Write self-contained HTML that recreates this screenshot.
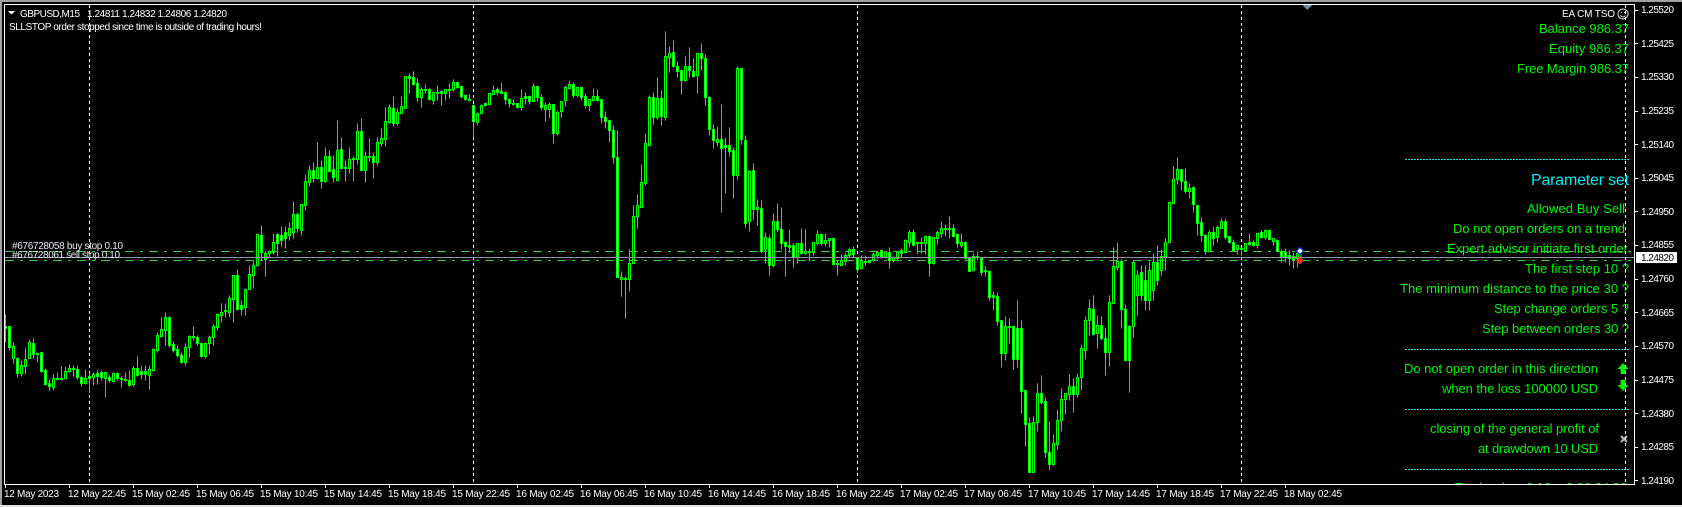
<!DOCTYPE html>
<html><head><meta charset="utf-8"><style>
html,body{margin:0;padding:0;background:#000;width:1682px;height:507px;overflow:hidden}
svg{display:block}
text{font-family:"Liberation Sans",sans-serif}
.p{font-size:10px;fill:#fff}
.g{font-size:13px;fill:#00f400;text-anchor:end}
</style></head><body>
<svg width="1682" height="507" viewBox="0 0 1682 507" xmlns="http://www.w3.org/2000/svg">
<rect width="1682" height="507" fill="#000"/>
<g shape-rendering="crispEdges">
<path d="M89.5 5V484M473.5 5V484M857.5 5V484M1241.5 5V484M1625.5 5V484" stroke="#fff" stroke-dasharray="3 3" fill="none"/>
<g transform="translate(.5 .5)" stroke="#00ff00" fill="none">
<path d="M5 314V342M9 326V350M13 342V363M17 357V377M21 360V376M25 347V374M29 339V358M33 338V358M37 352V362M41 352V372M45 368V385M49 379V390M53 374V390M57 372V380M61 366V380M65 366V379M69 364V372M73 365V376M77 365V379M81 375V386M85 369V384M89 372V392M93 372V385M97 370V384M101 370V380M105 372V397M109 375V382M113 372V382M117 372V380M121 376V387M125 372V381M129 370V386M133 366V386M137 356V376M141 365V379M145 365V380M149 365V389M153 348V371M157 332V352M161 317V337M165 312V345M169 316V347M173 341V352M177 345V357M181 352V363M185 343V365M189 335V357M193 326V340M197 335V345M201 342V357M205 342V358M209 335V354M213 324V345M217 313V330M221 303V322M225 303V317M229 295V317M233 275V322M237 269V310M241 300V315M245 288V315M249 265V289M253 260V288M257 233V266M261 225V260M265 250V276M269 250V257M273 233V254M277 233V256M281 226V246M285 226V248M289 222V240M293 201V238M297 212V232M301 204V235M305 174V210M309 165V186M313 162V182M317 142V179M321 160V188M325 147V182M329 150V171M333 155V182M337 120V180M341 137V169M345 160V181M349 147V173M353 156V181M357 123V164M361 118V170M365 151V182M369 138V161M373 152V178M377 137V165M381 128V146M385 107V146M389 104V123M393 96V126M397 108V125M401 96V113M405 76V108M409 73V93M413 71V85M417 78V101M421 87V107M425 84V93M429 88V100M433 91V104M437 85V100M441 90V105M445 89V100M449 83V98M453 79V91M457 82V88M461 85V98M465 94V100M469 94V101M473 105V138M477 112V125M481 104V113M485 103V106M489 92V105M493 85V94M497 87V95M501 82V93M505 91V104M509 98V107M513 99V105M517 103V108M521 89V110M525 92V104M529 95V104M533 83V101M537 86V101M541 94V110M545 102V121M549 102V118M553 104V143M557 110V135M561 101V117M565 85V106M569 80V88M573 82V97M577 87V97M581 86V100M585 93V108M589 99V111M593 88V101M597 89V101M601 99V123M605 111V128M609 120V142M613 125V163M617 130V277M621 271V296M625 276V318M629 249V291M633 205V263M637 194V228M641 164V207M645 133V185M649 95V145M653 92V124M657 77V119M661 90V125M665 31V120M669 46V72M673 40V67M677 61V77M681 69V94M685 56V81M689 47V77M693 58V77M697 52V93M701 43V70M705 54V105M709 96V135M713 124V148M717 126V146M721 104V212M725 137V193M729 127V156M733 147V198M737 66V179M741 68V144M745 135V227M749 170V231M753 163V219M757 199V225M761 200V253M765 232V263M769 235V275M773 213V267M777 203V232M781 207V249M785 241V276M789 229V252M793 243V267M797 243V263M801 228V254M805 229V254M809 248V261M813 242V255M817 230V245M821 233V245M825 233V246M829 238V247M833 237V265M837 260V275M841 254V266M845 253V265M849 247V257M853 246V257M857 257V272M861 255V269M865 255V265M869 260V263M873 252V261M877 250V258M881 249V258M885 251V258M889 247V268M893 256V262M897 251V260M901 248V257M905 239V253M909 230V247M913 229V245M917 241V254M921 237V253M925 235V254M929 235V276M933 236V264M937 230V244M941 221V237M945 224V236M949 216V238M953 224V237M957 233V247M961 233V247M965 241V259M969 257V271M973 253V271M977 251V260M981 257V275M985 266V276M989 271V300M993 291V310M997 292V325M1001 320V367M1005 316V360M1009 318V343M1013 326V369M1017 300V367M1021 320V413M1025 390V446M1029 417V472M1033 416V472M1037 383V431M1041 375V404M1045 397V457M1049 421V470M1053 434V465M1057 409V449M1061 388V431M1065 393V414M1069 374V400M1073 378V412M1077 373V397M1081 344V390M1085 316V359M1089 299V335M1093 295V335M1097 315V348M1101 316V340M1105 327V375M1109 295V366M1113 247V303M1117 242V270M1121 259V328M1125 304V361M1129 325V392M1133 260V337M1137 270V315M1141 265V300M1145 265V310M1149 261V310M1153 253V300M1157 245V285M1161 249V275M1165 238V270M1169 202V243M1173 166V203M1177 157V184M1181 169V190M1185 168V193M1189 183V198M1193 186V212M1197 205V235M1201 217V241M1205 234V254M1209 230V252M1213 226V245M1217 225V242M1221 218V228M1225 218V239M1229 236V243M1233 239V250M1237 245V254M1241 248V255M1245 243V251M1249 233V245M1253 240V246M1257 233V248M1261 230V238M1265 229V239M1269 229V239M1273 238V245M1277 239V251M1281 249V262M1285 248V262M1289 250V265M1293 252V268M1297 252V267"/>
<path fill="#000" d="M12 346h2V358h-2zM20 365h2V373h-2zM24 359h2V366h-2zM28 342h2V358h-2zM52 378h2V387h-2zM56 378h2V379h-2zM60 378h2V379h-2zM64 371h2V378h-2zM68 368h2V371h-2zM72 368h2V369h-2zM84 378h2V383h-2zM92 374h2V377h-2zM104 372h2V378h-2zM112 373h2V381h-2zM132 368h2V384h-2zM148 369h2V375h-2zM152 349h2V370h-2zM156 335h2V350h-2zM160 329h2V336h-2zM164 317h2V330h-2zM184 347h2V362h-2zM188 336h2V347h-2zM204 343h2V356h-2zM208 337h2V343h-2zM212 326h2V337h-2zM216 314h2V327h-2zM220 312h2V315h-2zM228 298h2V312h-2zM232 275h2V299h-2zM244 289h2V307h-2zM248 274h2V289h-2zM252 265h2V275h-2zM256 234h2V265h-2zM264 253h2V259h-2zM268 251h2V253h-2zM272 242h2V252h-2zM288 228h2V235h-2zM292 214h2V232h-2zM300 204h2V230h-2zM304 181h2V205h-2zM308 170h2V182h-2zM316 167h2V178h-2zM324 156h2V181h-2zM336 150h2V180h-2zM348 159h2V168h-2zM356 131h2V159h-2zM364 156h2V170h-2zM376 142h2V162h-2zM380 138h2V143h-2zM384 121h2V139h-2zM388 107h2V122h-2zM396 112h2V123h-2zM400 106h2V113h-2zM404 76h2V108h-2zM420 89h2V97h-2zM432 92h2V100h-2zM444 89h2V93h-2zM452 82h2V89h-2zM476 113h2V122h-2zM480 105h2V113h-2zM488 93h2V104h-2zM492 90h2V94h-2zM520 98h2V107h-2zM532 86h2V101h-2zM544 105h2V109h-2zM548 104h2V109h-2zM556 112h2V133h-2zM560 101h2V111h-2zM564 87h2V100h-2zM568 84h2V88h-2zM576 87h2V95h-2zM588 99h2V105h-2zM592 96h2V100h-2zM620 277h2V279h-2zM628 263h2V279h-2zM632 216h2V263h-2zM636 205h2V216h-2zM640 182h2V207h-2zM644 143h2V183h-2zM648 97h2V145h-2zM656 98h2V117h-2zM664 56h2V117h-2zM668 53h2V57h-2zM684 66h2V80h-2zM696 53h2V75h-2zM716 139h2V142h-2zM736 68h2V175h-2zM748 171h2V221h-2zM756 207h2V209h-2zM764 237h2V249h-2zM772 221h2V265h-2zM796 243h2V257h-2zM804 251h2V253h-2zM812 242h2V252h-2zM816 234h2V243h-2zM824 240h2V243h-2zM828 238h2V240h-2zM840 260h2V265h-2zM844 255h2V261h-2zM848 249h2V255h-2zM860 260h2V268h-2zM872 254h2V260h-2zM876 252h2V255h-2zM884 251h2V257h-2zM892 257h2V260h-2zM896 252h2V258h-2zM904 240h2V252h-2zM908 232h2V242h-2zM924 236h2V243h-2zM932 237h2V263h-2zM936 232h2V238h-2zM940 228h2V233h-2zM960 242h2V245h-2zM972 256h2V270h-2zM1004 326h2V353h-2zM1032 422h2V472h-2zM1036 393h2V422h-2zM1052 443h2V464h-2zM1056 420h2V444h-2zM1060 399h2V420h-2zM1064 393h2V399h-2zM1068 386h2V394h-2zM1076 377h2V394h-2zM1080 348h2V377h-2zM1084 320h2V350h-2zM1088 308h2V320h-2zM1096 325h2V333h-2zM1108 302h2V352h-2zM1112 266h2V303h-2zM1116 261h2V267h-2zM1132 262h2V326h-2zM1136 275h2V295h-2zM1148 270h2V300h-2zM1152 262h2V290h-2zM1160 256h2V270h-2zM1164 242h2V256h-2zM1168 202h2V242h-2zM1172 179h2V203h-2zM1176 169h2V179h-2zM1188 188h2V191h-2zM1208 232h2V251h-2zM1216 227h2V237h-2zM1220 221h2V228h-2zM1236 245h2V249h-2zM1244 243h2V250h-2zM1256 233h2V245h-2zM1264 230h2V237h-2zM1272 238h2V241h-2zM1296 253h2V258h-2z"/>
<path fill="#fff" d="M4 326h2V328h-2zM8 326h2V347h-2zM16 358h2V373h-2zM32 343h2V354h-2zM36 353h2V354h-2zM40 352h2V371h-2zM44 370h2V384h-2zM48 383h2V386h-2zM76 369h2V377h-2zM80 377h2V383h-2zM88 376h2V378h-2zM96 373h2V376h-2zM100 372h2V377h-2zM108 377h2V380h-2zM116 373h2V378h-2zM120 378h2V379h-2zM124 379h2V380h-2zM128 380h2V385h-2zM136 368h2V375h-2zM140 371h2V374h-2zM144 371h2V374h-2zM168 317h2V345h-2zM172 344h2V350h-2zM176 349h2V355h-2zM180 355h2V362h-2zM192 336h2V337h-2zM196 337h2V343h-2zM200 343h2V356h-2zM224 310h2V311h-2zM236 275h2V309h-2zM240 305h2V309h-2zM260 235h2V252h-2zM276 234h2V243h-2zM280 235h2V240h-2zM284 232h2V238h-2zM296 214h2V228h-2zM312 170h2V178h-2zM320 167h2V181h-2zM328 156h2V171h-2zM332 169h2V177h-2zM340 149h2V168h-2zM344 167h2V168h-2zM352 158h2V159h-2zM360 131h2V170h-2zM368 156h2V157h-2zM372 156h2V162h-2zM392 108h2V123h-2zM408 76h2V78h-2zM412 77h2V84h-2zM416 83h2V97h-2zM424 89h2V90h-2zM428 89h2V99h-2zM436 92h2V93h-2zM440 91h2V93h-2zM448 89h2V90h-2zM456 82h2V87h-2zM460 86h2V96h-2zM464 95h2V99h-2zM468 99h2V100h-2zM472 105h2V121h-2zM484 103h2V105h-2zM496 89h2V92h-2zM500 91h2V93h-2zM504 92h2V99h-2zM508 99h2V103h-2zM512 103h2V104h-2zM516 103h2V107h-2zM524 96h2V98h-2zM528 96h2V101h-2zM536 86h2V97h-2zM540 97h2V107h-2zM552 104h2V133h-2zM572 84h2V95h-2zM580 87h2V97h-2zM584 96h2V105h-2zM596 96h2V100h-2zM600 99h2V117h-2zM604 117h2V121h-2zM608 120h2V130h-2zM612 130h2V157h-2zM616 157h2V277h-2zM624 278h2V279h-2zM652 97h2V117h-2zM660 98h2V116h-2zM672 52h2V66h-2zM676 66h2V71h-2zM680 70h2V80h-2zM688 66h2V70h-2zM692 71h2V76h-2zM700 53h2V58h-2zM704 58h2V97h-2zM708 97h2V129h-2zM712 129h2V140h-2zM720 139h2V148h-2zM724 145h2V147h-2zM728 145h2V151h-2zM732 150h2V175h-2zM740 68h2V139h-2zM744 140h2V223h-2zM752 170h2V209h-2zM760 208h2V251h-2zM768 238h2V265h-2zM776 221h2V229h-2zM780 229h2V243h-2zM784 242h2V246h-2zM788 245h2V247h-2zM792 245h2V257h-2zM800 243h2V253h-2zM808 251h2V252h-2zM820 234h2V243h-2zM832 238h2V264h-2zM836 263h2V264h-2zM852 249h2V254h-2zM856 257h2V269h-2zM864 261h2V262h-2zM868 260h2V262h-2zM880 250h2V257h-2zM888 252h2V260h-2zM900 250h2V253h-2zM912 232h2V245h-2zM916 242h2V243h-2zM920 242h2V243h-2zM928 236h2V263h-2zM944 228h2V229h-2zM948 228h2V229h-2zM952 228h2V236h-2zM956 234h2V243h-2zM964 242h2V258h-2zM968 258h2V271h-2zM976 256h2V257h-2zM980 258h2V272h-2zM984 270h2V271h-2zM988 271h2V297h-2zM992 295h2V297h-2zM996 296h2V321h-2zM1000 320h2V353h-2zM1008 326h2V327h-2zM1012 326h2V359h-2zM1016 328h2V359h-2zM1020 328h2V391h-2zM1024 390h2V424h-2zM1028 423h2V472h-2zM1040 393h2V402h-2zM1044 401h2V452h-2zM1048 452h2V464h-2zM1072 386h2V394h-2zM1092 309h2V334h-2zM1100 325h2V338h-2zM1104 338h2V352h-2zM1120 261h2V309h-2zM1124 309h2V360h-2zM1128 326h2V360h-2zM1140 272h2V295h-2zM1144 280h2V300h-2zM1156 262h2V280h-2zM1180 169h2V181h-2zM1184 181h2V191h-2zM1192 187h2V204h-2zM1196 205h2V223h-2zM1200 222h2V235h-2zM1204 235h2V251h-2zM1212 232h2V238h-2zM1224 221h2V237h-2zM1228 236h2V242h-2zM1232 242h2V250h-2zM1240 248h2V249h-2zM1248 242h2V244h-2zM1252 242h2V245h-2zM1260 232h2V237h-2zM1268 230h2V239h-2zM1276 240h2V251h-2zM1280 251h2V256h-2zM1284 252h2V256h-2zM1288 255h2V258h-2zM1292 256h2V260h-2z"/>
</g>
<path d="M5 251.500H1634M5 260.500H1634" stroke="#32cd32" stroke-dasharray="9 6 3 6" fill="none"/>
<path d="M5 257.500H1634" stroke="#8a92a0" fill="none"/>
<path d="M1302 5h10l-5 5z" fill="#778899"/>
<path d="M1405 159.500H1629M1405 349.500H1629M1405 409.500H1629M1405 469.500H1629" stroke="#10e4ec" stroke-dasharray="2 1" fill="none"/>
</g>
<path d="M1301 253V259" stroke="#00ff00" stroke-width="1"/>
<path d="M1296.500 251l3.500-3.500 3.500 3.500-3.500 3.500z" fill="#fff" stroke="#0030ff" stroke-width="1.200"/>
<path d="M1296.500 260.500l3.500-3.500 3.500 3.500-3.500 3.500z" fill="#ff2010" stroke="#ff4020" stroke-width=".6"/>

<path d="M8 11h7l-3.500 3.500z" fill="#fff"/>
<text x="20" y="17" class="p" textLength="60" lengthAdjust="spacing">GBPUSD,M15</text>
<text x="87" y="17" class="p" textLength="140" lengthAdjust="spacing">1.24811 1.24832 1.24806 1.24820</text>
<text x="9" y="30" class="p" textLength="253" lengthAdjust="spacing">SLLSTOP order stopped since time is outside of trading hours!</text>
<text x="12" y="249" class="p" style="fill:#e4eaf0" textLength="111" lengthAdjust="spacing">#676728058 buy stop 0.10</text>
<text x="12" y="258" class="p" style="fill:#e4eaf0" textLength="108" lengthAdjust="spacing">#676728061 sell stop 0.10</text>

<text x="1562" y="17" class="p" textLength="53" lengthAdjust="spacing">EA CM TSO</text>
<circle cx="1623" cy="14" r="5" fill="none" stroke="#d8d8d8"/>
<path d="M1621 12.500h1M1624 12.500h1M1620.500 15.500q2.500 3 5 0" stroke="#d8d8d8" fill="none"/>

<text x="1629" y="33" class="g" textLength="90" lengthAdjust="spacing">Balance 986.37</text>
<text x="1629" y="53" class="g" textLength="80" lengthAdjust="spacing">Equity 986.37</text>
<text x="1629" y="73" class="g" textLength="112" lengthAdjust="spacing">Free Margin 986.37</text>
<text x="1629" y="185" class="g" style="font-size:16px;fill:#00eaf4" textLength="98" lengthAdjust="spacing">Parameter set</text>
<text x="1625" y="213" class="g" textLength="98" lengthAdjust="spacing">Allowed Buy Sell</text>
<text x="1625" y="233" class="g" textLength="172" lengthAdjust="spacing">Do not open orders on a trend</text>
<text x="1628" y="253" class="g" textLength="181" lengthAdjust="spacing">Expert advisor initiate first order</text>
<text x="1629" y="273" class="g" textLength="104" lengthAdjust="spacing">The first step 10 ?</text>
<text x="1629" y="293" class="g" textLength="229" lengthAdjust="spacing">The minimum distance to the price 30 ?</text>
<text x="1629" y="313" class="g" textLength="135" lengthAdjust="spacing">Step change orders 5 ?</text>
<text x="1629" y="333" class="g" textLength="147" lengthAdjust="spacing">Step between orders 30 ?</text>
<text x="1598" y="373" class="g" textLength="194" lengthAdjust="spacing">Do not open order in this direction</text>
<text x="1598" y="393" class="g" textLength="156" lengthAdjust="spacing">when the loss 100000 USD</text>
<text x="1599" y="433" class="g" textLength="169" lengthAdjust="spacing">closing of the general profit of</text>
<text x="1598" y="453" class="g" textLength="120" lengthAdjust="spacing">at drawdown 10 USD</text>
<text x="1627" y="492" class="g" textLength="172" lengthAdjust="spacing">Total orders 0.10 = 0.00 24.38</text>

<path d="M1623 363l5.500 6h-3v5h-5v-5h-3z" fill="#00f400"/>
<path d="M1623 391l5.500-6h-3v-5h-5v5h-3z" fill="#00f400"/>
<path d="M1621 436l6 6M1627 436l-6 6" stroke="#a8b0b8" stroke-width="2.200"/>

<g shape-rendering="crispEdges">
<path d="M89.500 5V40M1625.500 5V484" stroke="#fff" stroke-dasharray="3 3" fill="none"/>
<rect x="0" y="485" width="1682" height="20" fill="#000"/>
<rect x="0" y="0" width="1682" height="2" fill="#a0a0a0"/>
<rect x="0" y="0" width="2" height="507" fill="#a0a0a0"/>
<rect x="0" y="505" width="1682" height="2" fill="#e4e4e4"/>
<path d="M4 4.500H1634.500V484.500H4.500V4" stroke="#fff" fill="none"/>
<path d="M1635 10.500h3M1635 43.500h3M1635 77.500h3M1635 111.500h3M1635 144.500h3M1635 178.500h3M1635 211.500h3M1635 245.500h3M1635 279.500h3M1635 312.500h3M1635 346.500h3M1635 380.500h3M1635 413.500h3M1635 447.500h3M1635 480.500h3" stroke="#fff"/>
<path d="M5.500 485v3M69.500 485v3M133.500 485v3M197.500 485v3M261.500 485v3M325.500 485v3M389.500 485v3M453.500 485v3M517.500 485v3M581.500 485v3M645.500 485v3M709.500 485v3M773.500 485v3M837.500 485v3M901.500 485v3M965.500 485v3M1029.500 485v3M1093.500 485v3M1157.500 485v3M1221.500 485v3M1285.500 485v3" stroke="#fff"/>
<rect x="1636" y="252" width="41" height="11" fill="#fff"/>
</g>
<g>
<text x="1641" y="13" class="p" textLength="33">1.25520</text>
<text x="1641" y="47" class="p" textLength="33">1.25425</text>
<text x="1641" y="80" class="p" textLength="33">1.25330</text>
<text x="1641" y="114" class="p" textLength="33">1.25235</text>
<text x="1641" y="148" class="p" textLength="33">1.25140</text>
<text x="1641" y="181" class="p" textLength="33">1.25045</text>
<text x="1641" y="215" class="p" textLength="33">1.24950</text>
<text x="1641" y="248" class="p" textLength="33">1.24855</text>
<text x="1641" y="261" class="p" style="fill:#000" textLength="33">1.24820</text>
<text x="1641" y="282" class="p" textLength="33">1.24760</text>
<text x="1641" y="316" class="p" textLength="33">1.24665</text>
<text x="1641" y="349" class="p" textLength="33">1.24570</text>
<text x="1641" y="383" class="p" textLength="33">1.24475</text>
<text x="1641" y="417" class="p" textLength="33">1.24380</text>
<text x="1641" y="450" class="p" textLength="33">1.24285</text>
<text x="1641" y="484" class="p" textLength="33">1.24190</text>
</g>
<text x="4" y="497" class="p" textLength="55">12 May 2023</text>
<text x="68" y="497" class="p" textLength="58">12 May 22:45</text>
<text x="132" y="497" class="p" textLength="58">15 May 02:45</text>
<text x="196" y="497" class="p" textLength="58">15 May 06:45</text>
<text x="260" y="497" class="p" textLength="58">15 May 10:45</text>
<text x="324" y="497" class="p" textLength="58">15 May 14:45</text>
<text x="388" y="497" class="p" textLength="58">15 May 18:45</text>
<text x="452" y="497" class="p" textLength="58">15 May 22:45</text>
<text x="516" y="497" class="p" textLength="58">16 May 02:45</text>
<text x="580" y="497" class="p" textLength="58">16 May 06:45</text>
<text x="644" y="497" class="p" textLength="58">16 May 10:45</text>
<text x="708" y="497" class="p" textLength="58">16 May 14:45</text>
<text x="772" y="497" class="p" textLength="58">16 May 18:45</text>
<text x="836" y="497" class="p" textLength="58">16 May 22:45</text>
<text x="900" y="497" class="p" textLength="58">17 May 02:45</text>
<text x="964" y="497" class="p" textLength="58">17 May 06:45</text>
<text x="1028" y="497" class="p" textLength="58">17 May 10:45</text>
<text x="1092" y="497" class="p" textLength="58">17 May 14:45</text>
<text x="1156" y="497" class="p" textLength="58">17 May 18:45</text>
<text x="1220" y="497" class="p" textLength="58">17 May 22:45</text>
<text x="1284" y="497" class="p" textLength="58">18 May 02:45</text>
</svg>
</body></html>
